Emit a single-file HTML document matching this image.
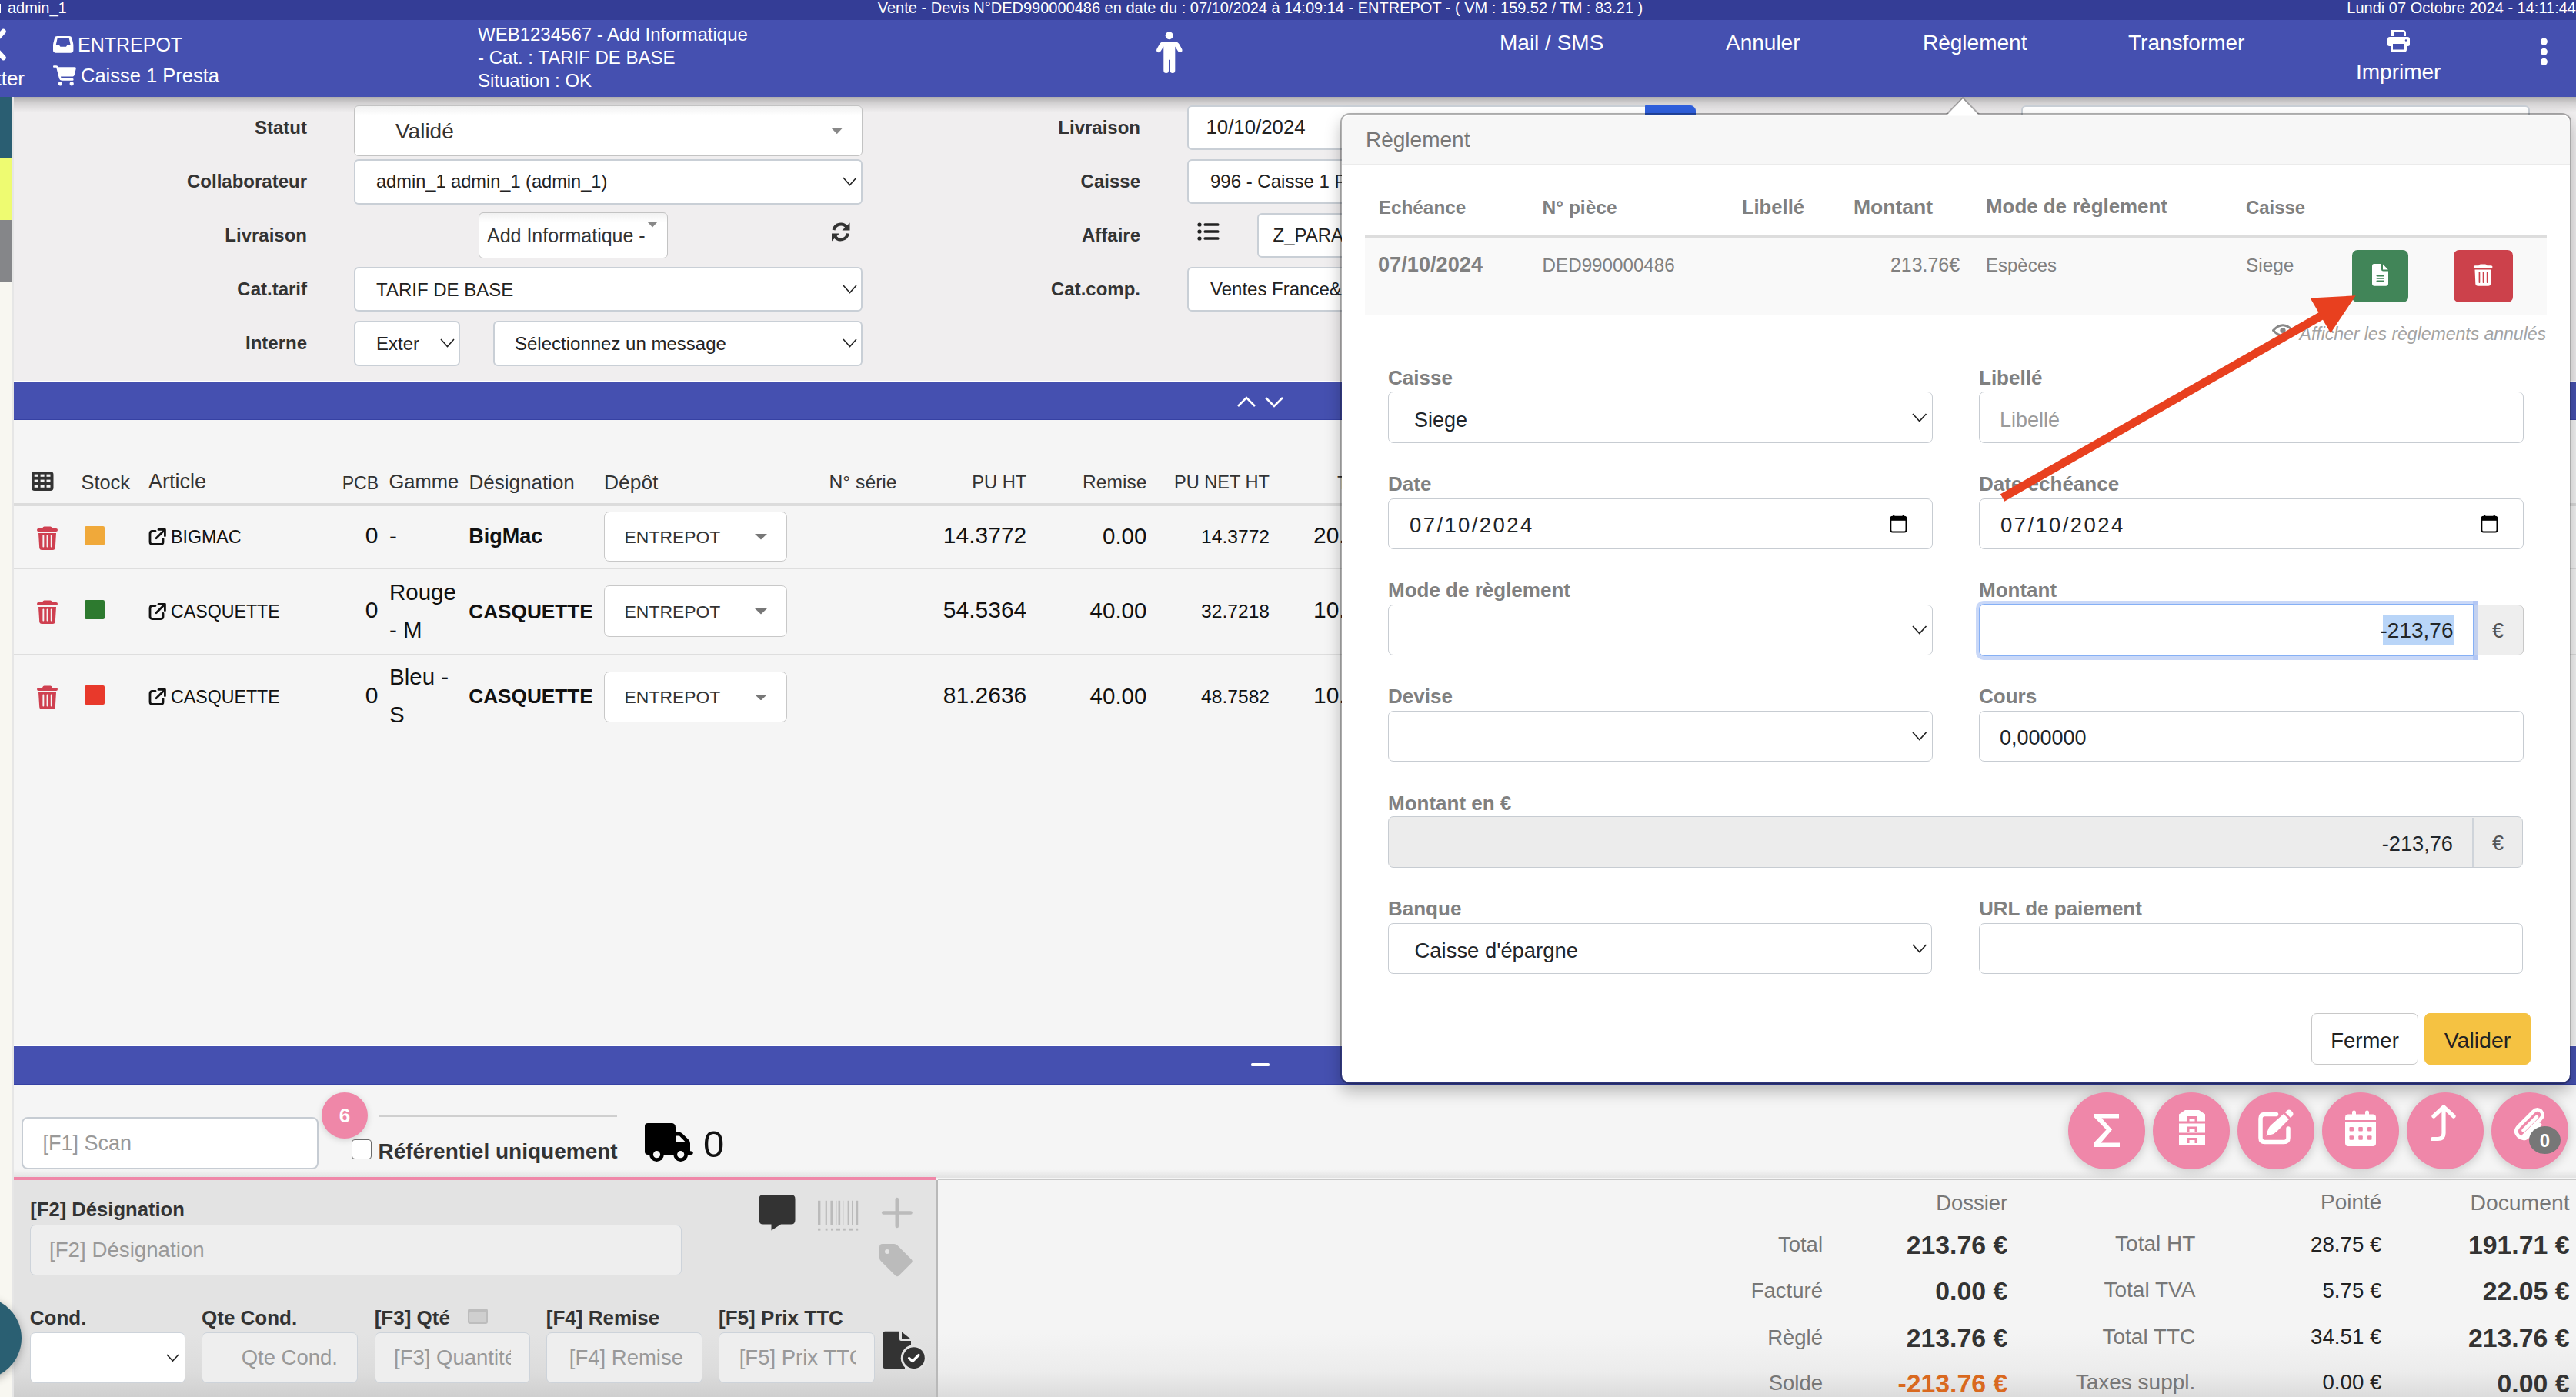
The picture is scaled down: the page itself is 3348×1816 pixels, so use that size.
<!DOCTYPE html><html><head><meta charset="utf-8"><title>Vente - Devis</title><style>html,body{margin:0;padding:0;width:3348px;height:1816px;overflow:hidden;position:relative;font-family:"Liberation Sans",sans-serif}</style></head><body><div style="position:absolute;left:0;top:0;width:3348px;height:1816px;background:#f5f5f5"></div>
<div style="position:absolute;left:0px;top:126px;width:16px;height:1690px;background:#f8f7f1;"></div>
<div style="position:absolute;left:16px;top:126px;width:2px;height:1690px;background:#e6e6e6;"></div>
<div style="position:absolute;left:0px;top:126px;width:16px;height:80px;background:#2a5e72;"></div>
<div style="position:absolute;left:0px;top:206px;width:16px;height:80px;background:#eefb71;"></div>
<div style="position:absolute;left:0px;top:286px;width:16px;height:80px;background:#858689;"></div>
<div style="position:absolute;left:18px;top:126px;width:3330px;height:370px;background:#f0eeef;"></div>
<div style="position:absolute;left:18px;top:546px;width:3330px;height:814px;background:#f5f5f5;"></div>
<div style="position:absolute;left:0px;top:0px;width:3348px;height:26px;background:#343d96;"></div>
<div style="position:absolute;left:0px;top:4.5px;width:1.4px;height:12.5px;background:#fff;"></div>
<div style="position:absolute;left:10px;top:0.07px;font-family:'Liberation Sans', sans-serif;font-size:20px;line-height:20px;height:20px;color:#fff;font-weight:normal;font-style:normal;white-space:nowrap;">admin_1</div>
<div style="position:absolute;left:1038px;width:1200px;text-align:center;top:0.07px;font-family:'Liberation Sans', sans-serif;font-size:20px;line-height:20px;height:20px;color:#fff;font-weight:normal;font-style:normal;white-space:nowrap;">Vente - Devis N°DED990000486 en date du : 07/10/2024 à 14:09:14 - ENTREPOT - ( VM : 159.52 / TM : 83.21 )</div>
<div style="position:absolute;right:0px;top:0.07px;font-family:'Liberation Sans', sans-serif;font-size:20px;line-height:20px;height:20px;color:#fff;font-weight:normal;font-style:normal;white-space:nowrap;">Lundi 07 Octobre 2024 - 14:11:44</div>
<div style="position:absolute;left:0px;top:26px;width:3348px;height:100px;background:#4550b0;"></div>
<div style="position:absolute;left:18px;top:126px;width:3330px;height:20px;background:linear-gradient(rgba(0,0,0,0.27), rgba(0,0,0,0.12) 40%, rgba(0,0,0,0.03) 85%, rgba(0,0,0,0));"></div>
<svg style="position:absolute;left:0px;top:36px;" width="12" height="44" viewBox="0 0 12 44"><polyline points="4.5,5 -11,22 4.5,39" fill="none" stroke="#fff" stroke-width="6.5" stroke-linecap="round" stroke-linejoin="round"/></svg>
<div style="position:absolute;right:3316px;top:88.59px;font-family:'Liberation Sans', sans-serif;font-size:26px;line-height:26px;height:26px;color:#fff;font-weight:normal;font-style:normal;white-space:nowrap;">Quitter</div>
<svg style="position:absolute;left:69.2px;top:45.5px;" width="26.4" height="23.6" viewBox="0 0 28 25"><path d="M5.5,1 H22.5 Q25,1 25.8,3.5 L27.5,10 Q28,12 28,14 V20.5 Q28,24 24.5,24 H3.5 Q0,24 0,20.5 V14 Q0,12 0.5,10 L2.2,3.5 Q3,1 5.5,1 Z M6,4 L4,13 H8.2 L10,15.7 H18 L19.8,13 H24 L22,4 Z" fill="#fff" fill-rule="evenodd"/></svg>
<div style="position:absolute;left:101px;top:45.84px;font-family:'Liberation Sans', sans-serif;font-size:25px;line-height:25px;height:25px;color:#fff;font-weight:normal;font-style:normal;white-space:nowrap;">ENTREPOT</div>
<svg style="position:absolute;left:69px;top:84px;" width="31" height="28" viewBox="0 0 31 28"><path d="M1,1.2 H4.3 Q6,1.2 6.6,3 L6.8,3.3 H28.2 Q30.2,3.3 29.7,5.4 L27.9,12.9 Q27.3,15.6 24.5,15.6 H10 L10.4,17.3 Q10.7,18.1 11.6,18.1 H25.3 Q26.6,18.1 26.6,19.4 Q26.6,20.7 25.3,20.7 H11.3 Q8.6,20.7 7.9,18 L4.2,3.8 H1 Q0,3.8 0,2.5 Q0,1.2 1,1.2 Z" fill="#fff"/><circle cx="9.4" cy="24.8" r="2.6" fill="#fff"/><circle cx="24.2" cy="24.8" r="2.6" fill="#fff"/></svg>
<div style="position:absolute;left:105px;top:86.41px;font-family:'Liberation Sans', sans-serif;font-size:25.5px;line-height:25.5px;height:25.5px;color:#fff;font-weight:normal;font-style:normal;white-space:nowrap;">Caisse 1 Presta</div>
<div style="position:absolute;left:621px;top:33.08px;font-family:'Liberation Sans', sans-serif;font-size:24px;line-height:24px;height:24px;color:#fff;font-weight:normal;font-style:normal;white-space:nowrap;">WEB1234567 - Add Informatique</div>
<div style="position:absolute;left:621px;top:63.38px;font-family:'Liberation Sans', sans-serif;font-size:24px;line-height:24px;height:24px;color:#fff;font-weight:normal;font-style:normal;white-space:nowrap;">- Cat. : TARIF DE BASE</div>
<div style="position:absolute;left:621px;top:93.28px;font-family:'Liberation Sans', sans-serif;font-size:24px;line-height:24px;height:24px;color:#fff;font-weight:normal;font-style:normal;white-space:nowrap;">Situation : OK</div>
<svg style="position:absolute;left:1500px;top:40px;" width="40" height="58" viewBox="0 0 40 58"><circle cx="19.7" cy="6.3" r="5" fill="#fff"/><path d="M12,14.6 H27.5 Q31,14.6 33,18 L36,23.5 Q37.3,26 35.5,27.5 Q33,29.5 31,26.5 L27.3,20.5 V51.5 Q27.3,55 24,55 Q20.8,55 20.8,51.5 V37.7 H19 V51.5 Q19,55 15.7,55 Q12.3,55 12.3,51.5 V20.5 L8.6,26.5 Q6.5,29.5 4,27.5 Q2.3,26 3.6,23.5 L6.6,18 Q8.5,14.6 12,14.6 Z" fill="#fff"/></svg>
<div style="position:absolute;left:1949px;top:41.80px;font-family:'Liberation Sans', sans-serif;font-size:28px;line-height:28px;height:28px;color:#fff;font-weight:normal;font-style:normal;white-space:nowrap;">Mail / SMS</div>
<div style="position:absolute;left:2243px;top:42.30px;font-family:'Liberation Sans', sans-serif;font-size:28px;line-height:28px;height:28px;color:#fff;font-weight:normal;font-style:normal;white-space:nowrap;">Annuler</div>
<div style="position:absolute;left:2499px;top:42.30px;font-family:'Liberation Sans', sans-serif;font-size:28px;line-height:28px;height:28px;color:#fff;font-weight:normal;font-style:normal;white-space:nowrap;">Règlement</div>
<div style="position:absolute;left:2766px;top:42.30px;font-family:'Liberation Sans', sans-serif;font-size:28px;line-height:28px;height:28px;color:#fff;font-weight:normal;font-style:normal;white-space:nowrap;">Transformer</div>
<svg style="position:absolute;left:3102px;top:38px;" width="31" height="31" viewBox="0 0 31 31"><path d="M6,1 H21 Q25,1 25,5 V9 H22 V4 H9 V9 H6 Z" fill="#fff"/><path d="M4,10 H27 Q30,10 30,13 V19.5 Q30,22 27.5,22 H26 V26.5 Q26,29.5 23,29.5 H8 Q5,29.5 5,26.5 V22 H3.5 Q1,22 1,19.5 V13 Q1,10 4,10 Z M8,19 V26.5 H23 V19 Z" fill="#fff" fill-rule="evenodd"/><circle cx="25" cy="14.5" r="1.2" fill="#4550b0"/></svg>
<div style="position:absolute;left:3062px;top:79.70px;font-family:'Liberation Sans', sans-serif;font-size:28px;line-height:28px;height:28px;color:#fff;font-weight:normal;font-style:normal;white-space:nowrap;">Imprimer</div>
<svg style="position:absolute;left:3300px;top:48px;" width="14" height="38" viewBox="0 0 14 38"><circle cx="6.4" cy="6" r="4.5" fill="#fff"/><circle cx="6.4" cy="19.3" r="4.5" fill="#fff"/><circle cx="6.4" cy="32.3" r="4.5" fill="#fff"/></svg>
<div style="position:absolute;right:2949px;top:153.68px;font-family:'Liberation Sans', sans-serif;font-size:24px;line-height:24px;height:24px;color:#333;font-weight:bold;font-style:normal;white-space:nowrap;">Statut</div>
<div style="position:absolute;right:2949px;top:223.68px;font-family:'Liberation Sans', sans-serif;font-size:24px;line-height:24px;height:24px;color:#333;font-weight:bold;font-style:normal;white-space:nowrap;">Collaborateur</div>
<div style="position:absolute;right:2949px;top:293.68px;font-family:'Liberation Sans', sans-serif;font-size:24px;line-height:24px;height:24px;color:#333;font-weight:bold;font-style:normal;white-space:nowrap;">Livraison</div>
<div style="position:absolute;right:2949px;top:363.68px;font-family:'Liberation Sans', sans-serif;font-size:24px;line-height:24px;height:24px;color:#333;font-weight:bold;font-style:normal;white-space:nowrap;">Cat.tarif</div>
<div style="position:absolute;right:2949px;top:433.68px;font-family:'Liberation Sans', sans-serif;font-size:24px;line-height:24px;height:24px;color:#333;font-weight:bold;font-style:normal;white-space:nowrap;">Interne</div>
<div style="position:absolute;box-sizing:border-box;left:459.5px;top:137px;width:661.0px;height:66px;background:#fff;border:1.5px solid #c3c3c3;border-radius:6px;background:linear-gradient(#f1f1f1 0, #fff 12px)"></div>
<div style="position:absolute;left:514px;top:156.60px;font-family:'Liberation Sans', sans-serif;font-size:28px;line-height:28px;height:28px;color:#333;font-weight:normal;font-style:normal;white-space:nowrap;">Validé</div>
<svg style="position:absolute;left:1079.5px;top:166px;" width="15.5" height="8.2" viewBox="0 0 15.5 8.2"><polygon points="0,0 15.5,0 7.75,8.2" fill="#888"/></svg>
<div style="position:absolute;box-sizing:border-box;left:459.5px;top:206.5px;width:661.0px;height:59.0px;background:#fff;border:2px solid #c9cfd6;border-radius:6px;"></div>
<div style="position:absolute;left:489px;top:225.02px;font-family:'Liberation Sans', sans-serif;font-size:23.6px;line-height:23.6px;height:23.6px;color:#222;font-weight:normal;font-style:normal;white-space:nowrap;">admin_1 admin_1 (admin_1)</div>
<svg style="position:absolute;left:1093.5px;top:229.25px;" width="21" height="13.5" viewBox="0 0 21 13.5"><polyline points="2,2 10.5,11.5 19,2" fill="none" stroke="#222" stroke-width="1.6"/></svg>
<div style="position:absolute;box-sizing:border-box;left:621.5px;top:276px;width:246.0px;height:59.5px;background:#fff;border:1.5px solid #c3c3c3;border-radius:6px;background:linear-gradient(#f1f1f1 0, #fff 12px)"></div>
<div style="position:absolute;left:633px;top:293.84px;font-family:'Liberation Sans', sans-serif;font-size:25px;line-height:25px;height:25px;color:#333;font-weight:normal;font-style:normal;white-space:nowrap;">Add Informatique -</div>
<svg style="position:absolute;left:841px;top:288px;" width="14" height="7.5" viewBox="0 0 14 7.5"><polygon points="0,0 14,0 7.0,7.5" fill="#888"/></svg>
<svg style="position:absolute;left:1079px;top:288px;" width="29" height="27" viewBox="0 0 29 27"><path d="M4.5,11 A9.5,9.5 0 0 1 21.5,7.5" fill="none" stroke="#333" stroke-width="4"/><polygon points="25.5,1.5 25.5,11.5 15.5,11.5" fill="#333"/><path d="M23,15.5 A9.5,9.5 0 0 1 6,19.5" fill="none" stroke="#333" stroke-width="4"/><polygon points="2,25.5 2,15.5 12,15.5" fill="#333"/></svg>
<div style="position:absolute;box-sizing:border-box;left:459.5px;top:347px;width:661.0px;height:57.5px;background:#fff;border:2px solid #c9cfd6;border-radius:6px;"></div>
<div style="position:absolute;left:489px;top:365.28px;font-family:'Liberation Sans', sans-serif;font-size:24px;line-height:24px;height:24px;color:#222;font-weight:normal;font-style:normal;white-space:nowrap;">TARIF DE BASE</div>
<svg style="position:absolute;left:1093.5px;top:369.25px;" width="21" height="13.5" viewBox="0 0 21 13.5"><polyline points="2,2 10.5,11.5 19,2" fill="none" stroke="#222" stroke-width="1.6"/></svg>
<div style="position:absolute;box-sizing:border-box;left:459.5px;top:417px;width:138.5px;height:58.5px;background:#fff;border:2px solid #c9cfd6;border-radius:6px;"></div>
<div style="position:absolute;left:489px;top:434.68px;font-family:'Liberation Sans', sans-serif;font-size:24px;line-height:24px;height:24px;color:#222;font-weight:normal;font-style:normal;white-space:nowrap;">Exter</div>
<svg style="position:absolute;left:570.5px;top:439.25px;" width="21" height="13.5" viewBox="0 0 21 13.5"><polyline points="2,2 10.5,11.5 19,2" fill="none" stroke="#222" stroke-width="1.6"/></svg>
<div style="position:absolute;box-sizing:border-box;left:640.5px;top:417px;width:480.0px;height:58.5px;background:#fff;border:2px solid #c9cfd6;border-radius:6px;"></div>
<div style="position:absolute;left:669px;top:434.68px;font-family:'Liberation Sans', sans-serif;font-size:24px;line-height:24px;height:24px;color:#222;font-weight:normal;font-style:normal;white-space:nowrap;">Sélectionnez un message</div>
<svg style="position:absolute;left:1093.5px;top:439.25px;" width="21" height="13.5" viewBox="0 0 21 13.5"><polyline points="2,2 10.5,11.5 19,2" fill="none" stroke="#222" stroke-width="1.6"/></svg>
<div style="position:absolute;right:1866px;top:154.08px;font-family:'Liberation Sans', sans-serif;font-size:24px;line-height:24px;height:24px;color:#333;font-weight:bold;font-style:normal;white-space:nowrap;">Livraison</div>
<div style="position:absolute;right:1866px;top:224.18px;font-family:'Liberation Sans', sans-serif;font-size:24px;line-height:24px;height:24px;color:#333;font-weight:bold;font-style:normal;white-space:nowrap;">Caisse</div>
<div style="position:absolute;right:1866px;top:294.18px;font-family:'Liberation Sans', sans-serif;font-size:24px;line-height:24px;height:24px;color:#333;font-weight:bold;font-style:normal;white-space:nowrap;">Affaire</div>
<div style="position:absolute;right:1866px;top:364.18px;font-family:'Liberation Sans', sans-serif;font-size:24px;line-height:24px;height:24px;color:#333;font-weight:bold;font-style:normal;white-space:nowrap;">Cat.comp.</div>
<div style="position:absolute;box-sizing:border-box;left:1543px;top:137px;width:607px;height:58px;background:#fff;border:2px solid #c9cfd6;border-radius:6px;"></div>
<div style="position:absolute;left:1567.5px;top:152.56px;font-family:'Liberation Sans', sans-serif;font-size:25.8px;line-height:25.8px;height:25.8px;color:#222;font-weight:normal;font-style:normal;white-space:nowrap;">10/10/2024</div>
<div style="position:absolute;box-sizing:border-box;left:1543px;top:207px;width:257px;height:58px;background:#fff;border:2px solid #c9cfd6;border-radius:6px;"></div>
<div style="position:absolute;left:1573px;top:224.18px;font-family:'Liberation Sans', sans-serif;font-size:24px;line-height:24px;height:24px;color:#222;font-weight:normal;font-style:normal;white-space:nowrap;">996 - Caisse 1 Presta</div>
<div style="position:absolute;box-sizing:border-box;left:1634px;top:277px;width:166px;height:58px;background:#fff;border:2px solid #c9cfd6;border-radius:6px;"></div>
<div style="position:absolute;left:1654.5px;top:294.18px;font-family:'Liberation Sans', sans-serif;font-size:24px;line-height:24px;height:24px;color:#222;font-weight:normal;font-style:normal;white-space:nowrap;">Z_PARAM</div>
<div style="position:absolute;box-sizing:border-box;left:1543px;top:347px;width:257px;height:58px;background:#fff;border:2px solid #c9cfd6;border-radius:6px;"></div>
<div style="position:absolute;left:1573px;top:364.18px;font-family:'Liberation Sans', sans-serif;font-size:24px;line-height:24px;height:24px;color:#222;font-weight:normal;font-style:normal;white-space:nowrap;">Ventes France&amp;International</div>
<svg style="position:absolute;left:1556px;top:289px;" width="30" height="25" viewBox="0 0 30 25"><circle cx="3" cy="3" r="2.6" fill="#222"/><circle cx="3" cy="12" r="2.6" fill="#222"/><circle cx="3" cy="21" r="2.6" fill="#222"/><rect x="8.5" y="1.3" width="20" height="3.4" rx="1.5" fill="#222"/><rect x="8.5" y="10.3" width="20" height="3.4" rx="1.5" fill="#222"/><rect x="8.5" y="19.3" width="20" height="3.4" rx="1.5" fill="#222"/></svg>
<div style="position:absolute;box-sizing:border-box;left:2138px;top:137px;width:66px;height:58px;background:#2f5fdc;border:1px solid #2f5fdc;border-radius:6px;border-radius:0 7px 7px 0"></div>
<div style="position:absolute;box-sizing:border-box;left:2627px;top:137px;width:661px;height:58px;background:#fff;border:2px solid #c9cfd6;border-radius:6px;"></div>
<div style="position:absolute;left:18px;top:495px;width:3330px;height:1px;background:#ffffff;"></div>
<div style="position:absolute;left:18px;top:496px;width:3330px;height:50px;background:#4550b0;border-bottom:1.5px solid #3641a3;box-sizing:border-box"></div>
<svg style="position:absolute;left:1604px;top:508px;" width="68" height="26" viewBox="0 0 68 26"><polyline points="5,20 16,9 27,20" fill="none" stroke="#fff" stroke-width="2.6"/><polyline points="41,9 52,20 63,9" fill="none" stroke="#fff" stroke-width="2.6"/></svg>
<svg style="position:absolute;left:41px;top:613px;" width="29" height="25" viewBox="0 0 29 25"><rect x="0" y="0" width="28.5" height="25" rx="4" fill="#333"/><rect x="3.7" y="3.6" width="5" height="3.2" fill="#f5f5f5"/><rect x="3.7" y="10.6" width="5" height="3.2" fill="#f5f5f5"/><rect x="3.7" y="17.6" width="5" height="3.2" fill="#f5f5f5"/><rect x="11.600000000000001" y="3.6" width="5" height="3.2" fill="#f5f5f5"/><rect x="11.600000000000001" y="10.6" width="5" height="3.2" fill="#f5f5f5"/><rect x="11.600000000000001" y="17.6" width="5" height="3.2" fill="#f5f5f5"/><rect x="19.5" y="3.6" width="5" height="3.2" fill="#f5f5f5"/><rect x="19.5" y="10.6" width="5" height="3.2" fill="#f5f5f5"/><rect x="19.5" y="17.6" width="5" height="3.2" fill="#f5f5f5"/></svg>
<div style="position:absolute;left:105.5px;top:614.50px;font-family:'Liberation Sans', sans-serif;font-size:25.4px;line-height:25.4px;height:25.4px;color:#333;font-weight:normal;font-style:normal;white-space:nowrap;">Stock</div>
<div style="position:absolute;left:193px;top:613.14px;font-family:'Liberation Sans', sans-serif;font-size:27px;line-height:27px;height:27px;color:#333;font-weight:normal;font-style:normal;white-space:nowrap;">Article</div>
<div style="position:absolute;right:2856px;top:616.53px;font-family:'Liberation Sans', sans-serif;font-size:23px;line-height:23px;height:23px;color:#333;font-weight:normal;font-style:normal;white-space:nowrap;">PCB</div>
<div style="position:absolute;left:505.5px;top:614.41px;font-family:'Liberation Sans', sans-serif;font-size:25.5px;line-height:25.5px;height:25.5px;color:#333;font-weight:normal;font-style:normal;white-space:nowrap;">Gamme</div>
<div style="position:absolute;left:609.5px;top:613.99px;font-family:'Liberation Sans', sans-serif;font-size:26px;line-height:26px;height:26px;color:#333;font-weight:normal;font-style:normal;white-space:nowrap;">Désignation</div>
<div style="position:absolute;left:785px;top:613.65px;font-family:'Liberation Sans', sans-serif;font-size:26.4px;line-height:26.4px;height:26.4px;color:#333;font-weight:normal;font-style:normal;white-space:nowrap;">Dépôt</div>
<div style="position:absolute;left:1077.5px;top:615.09px;font-family:'Liberation Sans', sans-serif;font-size:24.7px;line-height:24.7px;height:24.7px;color:#333;font-weight:normal;font-style:normal;white-space:nowrap;">N° série</div>
<div style="position:absolute;right:2013.7px;top:615.94px;font-family:'Liberation Sans', sans-serif;font-size:23.7px;line-height:23.7px;height:23.7px;color:#333;font-weight:normal;font-style:normal;white-space:nowrap;">PU HT</div>
<div style="position:absolute;right:1857.6px;top:615.18px;font-family:'Liberation Sans', sans-serif;font-size:24.6px;line-height:24.6px;height:24.6px;color:#333;font-weight:normal;font-style:normal;white-space:nowrap;">Remise</div>
<div style="position:absolute;right:1698px;top:616.02px;font-family:'Liberation Sans', sans-serif;font-size:23.6px;line-height:23.6px;height:23.6px;color:#333;font-weight:normal;font-style:normal;white-space:nowrap;">PU NET HT</div>
<div style="position:absolute;left:1738px;top:615.68px;font-family:'Liberation Sans', sans-serif;font-size:24px;line-height:24px;height:24px;color:#333;font-weight:normal;font-style:normal;white-space:nowrap;">Total HT</div>
<div style="position:absolute;left:18px;top:653.5px;width:3330px;height:4.5px;background:#dcdcdc;"></div>
<svg style="position:absolute;left:48px;top:684px;" width="27" height="31" viewBox="0 0 27 31"><path d="M9.5,0.5 H17.5 Q19,0.5 19.5,2 L20,3 H25 Q27,3 27,5 Q27,7 25,7 H2 Q0,7 0,5 Q0,3 2,3 H7 L7.5,2 Q8,0.5 9.5,0.5 Z" fill="#cf4050"/><path d="M2,9 H25 L23.8,28 Q23.6,31 20.5,31 H6.5 Q3.4,31 3.2,28 Z" fill="#cf4050"/><rect x="7.4" y="11.5" width="1.9" height="16" rx="0.9" fill="#f5f5f5"/><rect x="12.6" y="11.5" width="1.9" height="16" rx="0.9" fill="#f5f5f5"/><rect x="17.8" y="11.5" width="1.9" height="16" rx="0.9" fill="#f5f5f5"/></svg>
<div style="position:absolute;left:110.4px;top:683.6px;width:25.599999999999994px;height:25.5px;background:#f0a93a;border-radius:2px"></div>
<svg style="position:absolute;left:192.5px;top:687.1px;" width="23" height="23" viewBox="0 0 23 23"><path d="M9,3.5 H5 Q2,3.5 2,6.5 V17.5 Q2,20.5 5,20.5 H16 Q19,20.5 19,17.5 V13.5" fill="none" stroke="#111" stroke-width="2.8" stroke-linecap="round"/><path d="M13,1.4 H21.4 V9.8" fill="none" stroke="#111" stroke-width="2.8" stroke-linecap="round" stroke-linejoin="round"/><line x1="20.5" y1="2.3" x2="10" y2="12.8" stroke="#111" stroke-width="2.8" stroke-linecap="round"/></svg>
<div style="position:absolute;left:222px;top:686.96px;font-family:'Liberation Sans', sans-serif;font-size:23.2px;line-height:23.2px;height:23.2px;color:#111;font-weight:normal;font-style:normal;white-space:nowrap;">BIGMAC</div>
<div style="position:absolute;right:2856.7px;top:681.21px;font-family:'Liberation Sans', sans-serif;font-size:30px;line-height:30px;height:30px;color:#111;font-weight:normal;font-style:normal;white-space:nowrap;">0</div>
<div style="position:absolute;left:506px;top:681.63px;font-family:'Liberation Sans', sans-serif;font-size:29.5px;line-height:29.5px;height:29.5px;color:#111;font-weight:normal;font-style:normal;white-space:nowrap;">-</div>
<div style="position:absolute;left:609.3px;top:683.74px;font-family:'Liberation Sans', sans-serif;font-size:27px;line-height:27px;height:27px;color:#111;font-weight:bold;font-style:normal;white-space:nowrap;">BigMac</div>
<div style="position:absolute;box-sizing:border-box;left:784.5px;top:665.4px;width:238.79999999999995px;height:65.10000000000002px;background:#fff;border:1.5px solid #c8c8c8;border-radius:7px;"></div>
<div style="position:absolute;left:811.6px;top:687.22px;font-family:'Liberation Sans', sans-serif;font-size:22.9px;line-height:22.9px;height:22.9px;color:#333;font-weight:normal;font-style:normal;white-space:nowrap;">ENTREPOT</div>
<svg style="position:absolute;left:981px;top:694.45px;" width="16" height="7.5" viewBox="0 0 16 7.5"><polygon points="0,0 16,0 8.0,7.5" fill="#777"/></svg>
<div style="position:absolute;right:2013.7px;top:681.21px;font-family:'Liberation Sans', sans-serif;font-size:30px;line-height:30px;height:30px;color:#111;font-weight:normal;font-style:normal;white-space:nowrap;">14.3772</div>
<div style="position:absolute;right:1857.6px;top:681.63px;font-family:'Liberation Sans', sans-serif;font-size:29.5px;line-height:29.5px;height:29.5px;color:#111;font-weight:normal;font-style:normal;white-space:nowrap;">0.00</div>
<div style="position:absolute;right:1698px;top:685.78px;font-family:'Liberation Sans', sans-serif;font-size:24.6px;line-height:24.6px;height:24.6px;color:#111;font-weight:normal;font-style:normal;white-space:nowrap;">14.3772</div>
<div style="position:absolute;left:1707px;top:681.21px;font-family:'Liberation Sans', sans-serif;font-size:30px;line-height:30px;height:30px;color:#111;font-weight:normal;font-style:normal;white-space:nowrap;">20.</div>
<div style="position:absolute;left:18px;top:738px;width:3330px;height:1.5px;background:#dedede;"></div>
<svg style="position:absolute;left:48px;top:780px;" width="27" height="31" viewBox="0 0 27 31"><path d="M9.5,0.5 H17.5 Q19,0.5 19.5,2 L20,3 H25 Q27,3 27,5 Q27,7 25,7 H2 Q0,7 0,5 Q0,3 2,3 H7 L7.5,2 Q8,0.5 9.5,0.5 Z" fill="#cf4050"/><path d="M2,9 H25 L23.8,28 Q23.6,31 20.5,31 H6.5 Q3.4,31 3.2,28 Z" fill="#cf4050"/><rect x="7.4" y="11.5" width="1.9" height="16" rx="0.9" fill="#f5f5f5"/><rect x="12.6" y="11.5" width="1.9" height="16" rx="0.9" fill="#f5f5f5"/><rect x="17.8" y="11.5" width="1.9" height="16" rx="0.9" fill="#f5f5f5"/></svg>
<div style="position:absolute;left:110.4px;top:779.6px;width:25.599999999999994px;height:25.5px;background:#2d7a2f;border-radius:2px"></div>
<svg style="position:absolute;left:192.5px;top:784.3px;" width="23" height="23" viewBox="0 0 23 23"><path d="M9,3.5 H5 Q2,3.5 2,6.5 V17.5 Q2,20.5 5,20.5 H16 Q19,20.5 19,17.5 V13.5" fill="none" stroke="#111" stroke-width="2.8" stroke-linecap="round"/><path d="M13,1.4 H21.4 V9.8" fill="none" stroke="#111" stroke-width="2.8" stroke-linecap="round" stroke-linejoin="round"/><line x1="20.5" y1="2.3" x2="10" y2="12.8" stroke="#111" stroke-width="2.8" stroke-linecap="round"/></svg>
<div style="position:absolute;left:222px;top:784.16px;font-family:'Liberation Sans', sans-serif;font-size:23.2px;line-height:23.2px;height:23.2px;color:#111;font-weight:normal;font-style:normal;white-space:nowrap;">CASQUETTE</div>
<div style="position:absolute;right:2856.7px;top:778.40px;font-family:'Liberation Sans', sans-serif;font-size:30px;line-height:30px;height:30px;color:#111;font-weight:normal;font-style:normal;white-space:nowrap;">0</div>
<div style="position:absolute;left:506px;top:755.23px;font-family:'Liberation Sans', sans-serif;font-size:29.5px;line-height:29.5px;height:29.5px;color:#111;font-weight:normal;font-style:normal;white-space:nowrap;">Rouge</div>
<div style="position:absolute;left:506px;top:804.03px;font-family:'Liberation Sans', sans-serif;font-size:29.5px;line-height:29.5px;height:29.5px;color:#111;font-weight:normal;font-style:normal;white-space:nowrap;">- M</div>
<div style="position:absolute;left:609.3px;top:781.62px;font-family:'Liberation Sans', sans-serif;font-size:26.2px;line-height:26.2px;height:26.2px;color:#111;font-weight:bold;font-style:normal;white-space:nowrap;">CASQUETTE</div>
<div style="position:absolute;box-sizing:border-box;left:784.5px;top:761.3px;width:238.79999999999995px;height:66.90000000000009px;background:#fff;border:1.5px solid #c8c8c8;border-radius:7px;"></div>
<div style="position:absolute;left:811.6px;top:784.42px;font-family:'Liberation Sans', sans-serif;font-size:22.9px;line-height:22.9px;height:22.9px;color:#333;font-weight:normal;font-style:normal;white-space:nowrap;">ENTREPOT</div>
<svg style="position:absolute;left:981px;top:791.25px;" width="16" height="7.5" viewBox="0 0 16 7.5"><polygon points="0,0 16,0 8.0,7.5" fill="#777"/></svg>
<div style="position:absolute;right:2013.7px;top:778.40px;font-family:'Liberation Sans', sans-serif;font-size:30px;line-height:30px;height:30px;color:#111;font-weight:normal;font-style:normal;white-space:nowrap;">54.5364</div>
<div style="position:absolute;right:1857.6px;top:778.83px;font-family:'Liberation Sans', sans-serif;font-size:29.5px;line-height:29.5px;height:29.5px;color:#111;font-weight:normal;font-style:normal;white-space:nowrap;">40.00</div>
<div style="position:absolute;right:1698px;top:782.98px;font-family:'Liberation Sans', sans-serif;font-size:24.6px;line-height:24.6px;height:24.6px;color:#111;font-weight:normal;font-style:normal;white-space:nowrap;">32.7218</div>
<div style="position:absolute;left:1707px;top:778.40px;font-family:'Liberation Sans', sans-serif;font-size:30px;line-height:30px;height:30px;color:#111;font-weight:normal;font-style:normal;white-space:nowrap;">10.</div>
<div style="position:absolute;left:18px;top:849.5px;width:3330px;height:1.5px;background:#dedede;"></div>
<svg style="position:absolute;left:48px;top:891px;" width="27" height="31" viewBox="0 0 27 31"><path d="M9.5,0.5 H17.5 Q19,0.5 19.5,2 L20,3 H25 Q27,3 27,5 Q27,7 25,7 H2 Q0,7 0,5 Q0,3 2,3 H7 L7.5,2 Q8,0.5 9.5,0.5 Z" fill="#cf4050"/><path d="M2,9 H25 L23.8,28 Q23.6,31 20.5,31 H6.5 Q3.4,31 3.2,28 Z" fill="#cf4050"/><rect x="7.4" y="11.5" width="1.9" height="16" rx="0.9" fill="#f5f5f5"/><rect x="12.6" y="11.5" width="1.9" height="16" rx="0.9" fill="#f5f5f5"/><rect x="17.8" y="11.5" width="1.9" height="16" rx="0.9" fill="#f5f5f5"/></svg>
<div style="position:absolute;left:110.4px;top:890.5px;width:25.599999999999994px;height:25.5px;background:#e8392b;border-radius:2px"></div>
<svg style="position:absolute;left:192.5px;top:895.0px;" width="23" height="23" viewBox="0 0 23 23"><path d="M9,3.5 H5 Q2,3.5 2,6.5 V17.5 Q2,20.5 5,20.5 H16 Q19,20.5 19,17.5 V13.5" fill="none" stroke="#111" stroke-width="2.8" stroke-linecap="round"/><path d="M13,1.4 H21.4 V9.8" fill="none" stroke="#111" stroke-width="2.8" stroke-linecap="round" stroke-linejoin="round"/><line x1="20.5" y1="2.3" x2="10" y2="12.8" stroke="#111" stroke-width="2.8" stroke-linecap="round"/></svg>
<div style="position:absolute;left:222px;top:894.86px;font-family:'Liberation Sans', sans-serif;font-size:23.2px;line-height:23.2px;height:23.2px;color:#111;font-weight:normal;font-style:normal;white-space:nowrap;">CASQUETTE</div>
<div style="position:absolute;right:2856.7px;top:889.11px;font-family:'Liberation Sans', sans-serif;font-size:30px;line-height:30px;height:30px;color:#111;font-weight:normal;font-style:normal;white-space:nowrap;">0</div>
<div style="position:absolute;left:506px;top:865.43px;font-family:'Liberation Sans', sans-serif;font-size:29.5px;line-height:29.5px;height:29.5px;color:#111;font-weight:normal;font-style:normal;white-space:nowrap;">Bleu -</div>
<div style="position:absolute;left:506px;top:914.23px;font-family:'Liberation Sans', sans-serif;font-size:29.5px;line-height:29.5px;height:29.5px;color:#111;font-weight:normal;font-style:normal;white-space:nowrap;">S</div>
<div style="position:absolute;left:609.3px;top:892.32px;font-family:'Liberation Sans', sans-serif;font-size:26.2px;line-height:26.2px;height:26.2px;color:#111;font-weight:bold;font-style:normal;white-space:nowrap;">CASQUETTE</div>
<div style="position:absolute;box-sizing:border-box;left:784.5px;top:873px;width:238.79999999999995px;height:66.20000000000005px;background:#fff;border:1.5px solid #c8c8c8;border-radius:7px;"></div>
<div style="position:absolute;left:811.6px;top:895.12px;font-family:'Liberation Sans', sans-serif;font-size:22.9px;line-height:22.9px;height:22.9px;color:#333;font-weight:normal;font-style:normal;white-space:nowrap;">ENTREPOT</div>
<svg style="position:absolute;left:981px;top:902.6px;" width="16" height="7.5" viewBox="0 0 16 7.5"><polygon points="0,0 16,0 8.0,7.5" fill="#777"/></svg>
<div style="position:absolute;right:2013.7px;top:889.11px;font-family:'Liberation Sans', sans-serif;font-size:30px;line-height:30px;height:30px;color:#111;font-weight:normal;font-style:normal;white-space:nowrap;">81.2636</div>
<div style="position:absolute;right:1857.6px;top:889.53px;font-family:'Liberation Sans', sans-serif;font-size:29.5px;line-height:29.5px;height:29.5px;color:#111;font-weight:normal;font-style:normal;white-space:nowrap;">40.00</div>
<div style="position:absolute;right:1698px;top:893.68px;font-family:'Liberation Sans', sans-serif;font-size:24.6px;line-height:24.6px;height:24.6px;color:#111;font-weight:normal;font-style:normal;white-space:nowrap;">48.7582</div>
<div style="position:absolute;left:1707px;top:889.11px;font-family:'Liberation Sans', sans-serif;font-size:30px;line-height:30px;height:30px;color:#111;font-weight:normal;font-style:normal;white-space:nowrap;">10.</div>
<div style="position:absolute;left:18px;top:1359px;width:3330px;height:1px;background:#ffffff;"></div>
<div style="position:absolute;left:18px;top:1360px;width:3330px;height:50px;background:#4550b0;border-bottom:1.5px solid #3641a3;box-sizing:border-box"></div>
<div style="position:absolute;left:1626px;top:1382px;width:23.5px;height:3.5px;background:#fff;border-radius:1.5px"></div>
<div style="position:absolute;left:18px;top:1410px;width:3330px;height:1px;background:#ffffff;"></div>
<div style="position:absolute;box-sizing:border-box;left:28px;top:1452px;width:386px;height:67.5px;background:#fff;border:2px solid #c6ccd3;border-radius:8px;"></div>
<div style="position:absolute;left:55.4px;top:1473.14px;font-family:'Liberation Sans', sans-serif;font-size:27px;line-height:27px;height:27px;color:#999;font-weight:normal;font-style:normal;white-space:nowrap;">[F1] Scan</div>
<div style="position:absolute;left:492.5px;top:1449.5px;width:309.1px;height:2.0px;background:#cfcfcf;"></div>
<div style="position:absolute;left:418px;top:1420px;width:60px;height:60px;border-radius:50%;background:#ef87a8;box-shadow:0 2px 8px rgba(0,0,0,0.15)"></div>
<div style="position:absolute;left:-152px;width:1200px;text-align:center;top:1437.49px;font-family:'Liberation Sans', sans-serif;font-size:26px;line-height:26px;height:26px;color:#fff;font-weight:normal;font-style:normal;white-space:nowrap;font-weight:600">6</div>
<div style="position:absolute;box-sizing:border-box;left:457px;top:1481px;width:26px;height:25.5px;background:#fff;border:1.6px solid #6b6b6b;border-radius:4px;"></div>
<div style="position:absolute;left:491.5px;top:1482.70px;font-family:'Liberation Sans', sans-serif;font-size:28px;line-height:28px;height:28px;color:#333;font-weight:bold;font-style:normal;white-space:nowrap;">Référentiel uniquement</div>
<svg style="position:absolute;left:836px;top:1458px;" width="66" height="54" viewBox="0 0 66 54"><path d="M6,2 H36.5 Q42,2 42,7.5 V13.7 H46.5 Q49,13.7 51,15.7 L58.5,23 Q61,25.5 61,28.5 V38.3 Q64.8,38.5 64.8,40.5 Q64.8,43 62,43 H6 Q2,43 2,39 V6 Q2,2 6,2 Z M43,18.4 V26.4 H54.8 L47,18.4 Z" fill="#000" fill-rule="evenodd"/><circle cx="17.5" cy="42.7" r="9.4" fill="#000"/><circle cx="17.5" cy="42.7" r="4.6" fill="#f5f5f5"/><circle cx="48.7" cy="42.7" r="9.4" fill="#000"/><circle cx="48.7" cy="42.7" r="4.6" fill="#f5f5f5"/></svg>
<div style="position:absolute;left:914px;top:1462.92px;font-family:'Liberation Sans', sans-serif;font-size:49px;line-height:49px;height:49px;color:#111;font-weight:normal;font-style:normal;white-space:nowrap;">0</div>
<div style="position:absolute;left:18px;top:1520px;width:3330px;height:11px;background:linear-gradient(rgba(0,0,0,0), rgba(0,0,0,0.08));"></div>
<div style="position:absolute;left:18px;top:1530px;width:1199px;height:4px;background:#ef87a8;"></div>
<div style="position:absolute;left:18px;top:1534px;width:1199px;height:282px;background:linear-gradient(#e3e3e3 0, #e3e3e3 200px, #dcdcdc 250px, #cfcfcf 100%);"></div>
<div style="position:absolute;left:1217px;top:1534px;width:2px;height:282px;background:#b9b9b9;"></div>
<div style="position:absolute;left:39.3px;top:1560.33px;font-family:'Liberation Sans', sans-serif;font-size:25.6px;line-height:25.6px;height:25.6px;color:#333;font-weight:bold;font-style:normal;white-space:nowrap;">[F2] Désignation</div>
<div style="position:absolute;box-sizing:border-box;left:38.8px;top:1592.3px;width:847.2px;height:65.70000000000005px;background:#eeeeee;border:1.5px solid #cdd3da;border-radius:7px;"></div>
<div style="position:absolute;left:64px;top:1611.05px;font-family:'Liberation Sans', sans-serif;font-size:27.7px;line-height:27.7px;height:27.7px;color:#999;font-weight:normal;font-style:normal;white-space:nowrap;">[F2] Désignation</div>
<svg style="position:absolute;left:986px;top:1552px;" width="49" height="49" viewBox="0 0 49 49"><path d="M6,1 H42 Q47.5,1 47.5,6.5 V34 Q47.5,39.5 42,39.5 H29 L16.5,47.5 V39.5 H6 Q0.5,39.5 0.5,34 V6.5 Q0.5,1 6,1 Z" fill="#333"/></svg>
<svg style="position:absolute;left:1063px;top:1560px;" width="54" height="41" viewBox="0 0 54 41"><rect x="0" y="0.8" width="3.4" height="32.2" fill="#bbb"/><rect x="9.7" y="0.8" width="2.2" height="32.2" fill="#bbb"/><rect x="16.4" y="0.8" width="2.8" height="32.2" fill="#bbb"/><rect x="23.3" y="0.8" width="1.1" height="32.2" fill="#bbb"/><rect x="26.5" y="0.8" width="2.6" height="32.2" fill="#bbb"/><rect x="32.2" y="0.8" width="1.1" height="32.2" fill="#bbb"/><rect x="38.6" y="0.8" width="2.2" height="32.2" fill="#bbb"/><rect x="44" y="0.8" width="1.1" height="32.2" fill="#bbb"/><rect x="49.4" y="0.8" width="2.8" height="32.2" fill="#bbb"/><rect x="0" y="36.8" width="3.4" height="2.8" fill="#bbb"/><rect x="9.7" y="36.8" width="2.8" height="2.8" fill="#bbb"/><rect x="17" y="36.8" width="2.8" height="2.8" fill="#bbb"/><rect x="23" y="36.8" width="6" height="2.8" fill="#bbb"/><rect x="33" y="36.8" width="2.8" height="2.8" fill="#bbb"/><rect x="40" y="36.8" width="6" height="2.8" fill="#bbb"/><rect x="49.4" y="36.8" width="2.8" height="2.8" fill="#bbb"/></svg>
<svg style="position:absolute;left:1145px;top:1556px;" width="42" height="41" viewBox="0 0 42 41"><line x1="20.8" y1="3" x2="20.8" y2="38" stroke="#bbb" stroke-width="4.6" stroke-linecap="round"/><line x1="3.3" y1="20.5" x2="38.5" y2="20.5" stroke="#bbb" stroke-width="4.6" stroke-linecap="round"/></svg>
<svg style="position:absolute;left:1142px;top:1616px;" width="46" height="45" viewBox="0 0 46 45"><path d="M1,5 Q1,1 5,1 H20 Q22.5,1 24.5,3 L42.5,21 Q45,23.5 42.5,26 L26.5,42 Q24,44.5 21.5,42 L3.5,24 Q1,21.5 1,19 Z" fill="#bbb"/><circle cx="11" cy="11" r="3" fill="#e3e3e3"/></svg>
<div style="position:absolute;left:-79.4px;top:1686.3px;width:107px;height:107px;border-radius:50%;background:#2a5f72;box-shadow:0 3px 12px rgba(0,0,0,0.3)"></div>
<div style="position:absolute;left:38.8px;top:1699.99px;font-family:'Liberation Sans', sans-serif;font-size:26px;line-height:26px;height:26px;color:#333;font-weight:bold;font-style:normal;white-space:nowrap;">Cond.</div>
<div style="position:absolute;box-sizing:border-box;left:38.8px;top:1732px;width:202.2px;height:65.5px;background:#fff;border:1.5px solid #cdd3da;border-radius:7px;"></div>
<svg style="position:absolute;left:214.5px;top:1759.0px;" width="19" height="12" viewBox="0 0 19 12"><polyline points="2,2 9.5,10 17,2" fill="none" stroke="#222" stroke-width="1.6"/></svg>
<div style="position:absolute;left:262px;top:1699.99px;font-family:'Liberation Sans', sans-serif;font-size:26px;line-height:26px;height:26px;color:#333;font-weight:bold;font-style:normal;white-space:nowrap;">Qte Cond.</div>
<div style="position:absolute;box-sizing:border-box;left:262px;top:1732px;width:202.8px;height:65.5px;background:#eeeeee;border:1.5px solid #cdd3da;border-radius:7px;"></div>
<div style="position:absolute;right:2909px;top:1751.22px;font-family:'Liberation Sans', sans-serif;font-size:27.5px;line-height:27.5px;height:27.5px;color:#999;font-weight:normal;font-style:normal;white-space:nowrap;">Qte Cond.</div>
<div style="position:absolute;left:486.7px;top:1699.99px;font-family:'Liberation Sans', sans-serif;font-size:26px;line-height:26px;height:26px;color:#333;font-weight:bold;font-style:normal;white-space:nowrap;">[F3] Qté</div>
<div style="position:absolute;left:607.5px;top:1701px;width:26.5px;height:20px;background:#bdbdbd;border-radius:3px"></div>
<div style="position:absolute;left:610px;top:1706px;width:21.5px;height:12px;background:#cfcfcf;border-radius:1px"></div>
<div style="position:absolute;box-sizing:border-box;left:486.7px;top:1732px;width:202.3px;height:65.5px;background:#eeeeee;border:1.5px solid #cdd3da;border-radius:7px;"></div>
<div style="position:absolute;left:488px;top:1740px;width:176px;height:50px;overflow:hidden">
<div style="position:absolute;left:24px;top:11.22px;font-family:'Liberation Sans', sans-serif;font-size:27.5px;line-height:27.5px;height:27.5px;color:#999;font-weight:normal;font-style:normal;white-space:nowrap;">[F3] Quantité</div>
</div>
<div style="position:absolute;left:709.8px;top:1699.99px;font-family:'Liberation Sans', sans-serif;font-size:26px;line-height:26px;height:26px;color:#333;font-weight:bold;font-style:normal;white-space:nowrap;">[F4] Remise</div>
<div style="position:absolute;box-sizing:border-box;left:709.8px;top:1732px;width:203.20000000000005px;height:65.5px;background:#eeeeee;border:1.5px solid #cdd3da;border-radius:7px;"></div>
<div style="position:absolute;right:2460px;top:1751.22px;font-family:'Liberation Sans', sans-serif;font-size:27.5px;line-height:27.5px;height:27.5px;color:#999;font-weight:normal;font-style:normal;white-space:nowrap;">[F4] Remise</div>
<div style="position:absolute;left:934px;top:1699.99px;font-family:'Liberation Sans', sans-serif;font-size:26px;line-height:26px;height:26px;color:#333;font-weight:bold;font-style:normal;white-space:nowrap;">[F5] Prix TTC</div>
<div style="position:absolute;box-sizing:border-box;left:934px;top:1732px;width:203px;height:65.5px;background:#eeeeee;border:1.5px solid #cdd3da;border-radius:7px;"></div>
<div style="position:absolute;left:936px;top:1740px;width:177px;height:50px;overflow:hidden">
<div style="position:absolute;left:24.7px;top:11.22px;font-family:'Liberation Sans', sans-serif;font-size:27.5px;line-height:27.5px;height:27.5px;color:#999;font-weight:normal;font-style:normal;white-space:nowrap;">[F5] Prix TTC</div>
</div>
<svg style="position:absolute;left:1146px;top:1729px;" width="62" height="52" viewBox="0 0 62 52"><path d="M4,1.8 H23 V12 Q23,14 25,14 H38 V34 A16,16 0 0 0 30,50 H4 Q1.8,50 1.8,47.8 V4 Q1.8,1.8 4,1.8 Z" fill="#333"/><path d="M26,2.5 L37.5,11.5 H26 Z" fill="#333"/><circle cx="41.8" cy="36.2" r="17" fill="#e3e3e3"/><circle cx="41.8" cy="36.2" r="14" fill="#333"/><polyline points="35.5,36.5 40,40.5 48,32.5" fill="none" stroke="#fff" stroke-width="3.2" stroke-linecap="round" stroke-linejoin="round"/></svg>
<div style="position:absolute;left:1219px;top:1531.5px;width:2129px;height:2.5px;background:#c8c8c8;"></div>
<div style="position:absolute;left:1219px;top:1534px;width:2129px;height:282px;background:linear-gradient(#f4f4f4 0, #f4f4f4 200px, #ececec 250px, #dcdcdc 100%);"></div>
<div style="position:absolute;right:738.8000000000002px;top:1549.81px;font-family:'Liberation Sans', sans-serif;font-size:27.4px;line-height:27.4px;height:27.4px;color:#777;font-weight:normal;font-style:normal;white-space:nowrap;">Dossier</div>
<div style="position:absolute;right:252.5999999999999px;top:1549.30px;font-family:'Liberation Sans', sans-serif;font-size:28px;line-height:28px;height:28px;color:#777;font-weight:normal;font-style:normal;white-space:nowrap;">Pointé</div>
<div style="position:absolute;right:8.5px;top:1549.04px;font-family:'Liberation Sans', sans-serif;font-size:28.3px;line-height:28.3px;height:28.3px;color:#777;font-weight:normal;font-style:normal;white-space:nowrap;">Document</div>
<div style="position:absolute;right:979px;top:1603.72px;font-family:'Liberation Sans', sans-serif;font-size:27.5px;line-height:27.5px;height:27.5px;color:#777;font-weight:normal;font-style:normal;white-space:nowrap;">Total</div>
<div style="position:absolute;right:738.8000000000002px;top:1601.89px;font-family:'Liberation Sans', sans-serif;font-size:33.8px;line-height:33.8px;height:33.8px;color:#333;font-weight:bold;font-style:normal;white-space:nowrap;">213.76 €</div>
<div style="position:absolute;right:494.6999999999998px;top:1603.30px;font-family:'Liberation Sans', sans-serif;font-size:28px;line-height:28px;height:28px;color:#777;font-weight:normal;font-style:normal;white-space:nowrap;">Total HT</div>
<div style="position:absolute;right:252.5999999999999px;top:1603.55px;font-family:'Liberation Sans', sans-serif;font-size:27.7px;line-height:27.7px;height:27.7px;color:#222;font-weight:normal;font-style:normal;white-space:nowrap;">28.75 €</div>
<div style="position:absolute;right:8.5px;top:1601.89px;font-family:'Liberation Sans', sans-serif;font-size:33.8px;line-height:33.8px;height:33.8px;color:#333;font-weight:bold;font-style:normal;white-space:nowrap;">191.71 €</div>
<div style="position:absolute;right:979px;top:1663.72px;font-family:'Liberation Sans', sans-serif;font-size:27.5px;line-height:27.5px;height:27.5px;color:#777;font-weight:normal;font-style:normal;white-space:nowrap;">Facturé</div>
<div style="position:absolute;right:738.8000000000002px;top:1661.89px;font-family:'Liberation Sans', sans-serif;font-size:33.8px;line-height:33.8px;height:33.8px;color:#333;font-weight:bold;font-style:normal;white-space:nowrap;">0.00 €</div>
<div style="position:absolute;right:494.6999999999998px;top:1663.30px;font-family:'Liberation Sans', sans-serif;font-size:28px;line-height:28px;height:28px;color:#777;font-weight:normal;font-style:normal;white-space:nowrap;">Total TVA</div>
<div style="position:absolute;right:252.5999999999999px;top:1663.55px;font-family:'Liberation Sans', sans-serif;font-size:27.7px;line-height:27.7px;height:27.7px;color:#222;font-weight:normal;font-style:normal;white-space:nowrap;">5.75 €</div>
<div style="position:absolute;right:8.5px;top:1661.89px;font-family:'Liberation Sans', sans-serif;font-size:33.8px;line-height:33.8px;height:33.8px;color:#333;font-weight:bold;font-style:normal;white-space:nowrap;">22.05 €</div>
<div style="position:absolute;right:979px;top:1724.52px;font-family:'Liberation Sans', sans-serif;font-size:27.5px;line-height:27.5px;height:27.5px;color:#777;font-weight:normal;font-style:normal;white-space:nowrap;">Règlé</div>
<div style="position:absolute;right:738.8000000000002px;top:1722.69px;font-family:'Liberation Sans', sans-serif;font-size:33.8px;line-height:33.8px;height:33.8px;color:#333;font-weight:bold;font-style:normal;white-space:nowrap;">213.76 €</div>
<div style="position:absolute;right:494.6999999999998px;top:1724.10px;font-family:'Liberation Sans', sans-serif;font-size:28px;line-height:28px;height:28px;color:#777;font-weight:normal;font-style:normal;white-space:nowrap;">Total TTC</div>
<div style="position:absolute;right:252.5999999999999px;top:1724.35px;font-family:'Liberation Sans', sans-serif;font-size:27.7px;line-height:27.7px;height:27.7px;color:#222;font-weight:normal;font-style:normal;white-space:nowrap;">34.51 €</div>
<div style="position:absolute;right:8.5px;top:1722.69px;font-family:'Liberation Sans', sans-serif;font-size:33.8px;line-height:33.8px;height:33.8px;color:#333;font-weight:bold;font-style:normal;white-space:nowrap;">213.76 €</div>
<div style="position:absolute;right:979px;top:1783.52px;font-family:'Liberation Sans', sans-serif;font-size:27.5px;line-height:27.5px;height:27.5px;color:#777;font-weight:normal;font-style:normal;white-space:nowrap;">Solde</div>
<div style="position:absolute;right:738.8000000000002px;top:1781.69px;font-family:'Liberation Sans', sans-serif;font-size:33.8px;line-height:33.8px;height:33.8px;color:#d9691f;font-weight:bold;font-style:normal;white-space:nowrap;">-213.76 €</div>
<div style="position:absolute;right:494.6999999999998px;top:1783.10px;font-family:'Liberation Sans', sans-serif;font-size:28px;line-height:28px;height:28px;color:#777;font-weight:normal;font-style:normal;white-space:nowrap;">Taxes suppl.</div>
<div style="position:absolute;right:252.5999999999999px;top:1783.35px;font-family:'Liberation Sans', sans-serif;font-size:27.7px;line-height:27.7px;height:27.7px;color:#222;font-weight:normal;font-style:normal;white-space:nowrap;">0.00 €</div>
<div style="position:absolute;right:8.5px;top:1781.69px;font-family:'Liberation Sans', sans-serif;font-size:33.8px;line-height:33.8px;height:33.8px;color:#333;font-weight:bold;font-style:normal;white-space:nowrap;">0.00 €</div>
<div style="position:absolute;box-sizing:border-box;left:1742px;top:146.5px;width:1599.5px;height:1262.5px;background:#fff;border:2px solid rgba(0,0,0,0.3);background-clip:padding-box;border-radius:12px;box-shadow:0 10px 20px rgba(0,0,0,0.25)"></div>
<div style="position:absolute;left:1744px;top:148.5px;width:1595.5px;height:64.5px;background:#f7f7f7;border-bottom:1.5px solid #ebebeb;border-radius:10px 10px 0 0;box-shadow:inset 0 1.5px 0 #fff"></div>
<svg style="position:absolute;left:2526px;top:124px;" width="50" height="25" viewBox="0 0 50 25"><polygon points="3,24 25,2 47,24" fill="rgba(0,0,0,0.25)"/><polygon points="5,25 25,4.2 45,25" fill="#fff"/></svg>
<div style="position:absolute;left:1775px;top:168.30px;font-family:'Liberation Sans', sans-serif;font-size:28px;line-height:28px;height:28px;color:#777;font-weight:normal;font-style:normal;white-space:nowrap;">Règlement</div>
<div style="position:absolute;left:1791.8px;top:257.73px;font-family:'Liberation Sans', sans-serif;font-size:24.3px;line-height:24.3px;height:24.3px;color:#808080;font-weight:bold;font-style:normal;white-space:nowrap;">Echéance</div>
<div style="position:absolute;left:2004.6px;top:257.56px;font-family:'Liberation Sans', sans-serif;font-size:24.5px;line-height:24.5px;height:24.5px;color:#808080;font-weight:bold;font-style:normal;white-space:nowrap;">N° pièce</div>
<div style="position:absolute;left:2263.7px;top:256.54px;font-family:'Liberation Sans', sans-serif;font-size:25.7px;line-height:25.7px;height:25.7px;color:#808080;font-weight:bold;font-style:normal;white-space:nowrap;">Libellé</div>
<div style="position:absolute;left:2409px;top:255.87px;font-family:'Liberation Sans', sans-serif;font-size:26.5px;line-height:26.5px;height:26.5px;color:#808080;font-weight:bold;font-style:normal;white-space:nowrap;">Montant</div>
<div style="position:absolute;left:2581px;top:256.38px;font-family:'Liberation Sans', sans-serif;font-size:25.9px;line-height:25.9px;height:25.9px;color:#808080;font-weight:bold;font-style:normal;white-space:nowrap;">Mode de règlement</div>
<div style="position:absolute;left:2919px;top:258.07px;font-family:'Liberation Sans', sans-serif;font-size:23.9px;line-height:23.9px;height:23.9px;color:#808080;font-weight:bold;font-style:normal;white-space:nowrap;">Caisse</div>
<div style="position:absolute;left:1774px;top:305px;width:1536px;height:4px;background:#dddddd;"></div>
<div style="position:absolute;left:1774px;top:309px;width:1536px;height:100px;background:#f9f9f9;"></div>
<div style="position:absolute;left:1791px;top:330.48px;font-family:'Liberation Sans', sans-serif;font-size:27.2px;line-height:27.2px;height:27.2px;color:#808080;font-weight:bold;font-style:normal;white-space:nowrap;">07/10/2024</div>
<div style="position:absolute;left:2004.6px;top:333.01px;font-family:'Liberation Sans', sans-serif;font-size:24.2px;line-height:24.2px;height:24.2px;color:#808080;font-weight:normal;font-style:normal;white-space:nowrap;">DED990000486</div>
<div style="position:absolute;right:801px;top:332.42px;font-family:'Liberation Sans', sans-serif;font-size:24.9px;line-height:24.9px;height:24.9px;color:#808080;font-weight:normal;font-style:normal;white-space:nowrap;">213.76€</div>
<div style="position:absolute;left:2581px;top:333.18px;font-family:'Liberation Sans', sans-serif;font-size:24px;line-height:24px;height:24px;color:#808080;font-weight:normal;font-style:normal;white-space:nowrap;">Espèces</div>
<div style="position:absolute;left:2919px;top:332.85px;font-family:'Liberation Sans', sans-serif;font-size:24.4px;line-height:24.4px;height:24.4px;color:#808080;font-weight:normal;font-style:normal;white-space:nowrap;">Siege</div>
<div style="position:absolute;left:3057px;top:325px;width:73px;height:68px;background:#418558;border-radius:7px"></div>
<svg style="position:absolute;left:3082px;top:342px;" width="24" height="31" viewBox="0 0 24 31"><path d="M3.5,1 H13 V8 Q13,10.5 15.5,10.5 H22 V26.5 Q22,29.7 18.8,29.7 H4.2 Q1,29.7 1,26.5 V4.2 Q1,1 3.5,1 Z" fill="#fff"/><path d="M15,1.5 L21.8,8.5 H15 Z" fill="#fff"/><rect x="6.5" y="15.7" width="10.5" height="1.7" rx="0.8" fill="#418558"/><rect x="6.5" y="19" width="10.5" height="1.7" rx="0.8" fill="#418558"/><rect x="6.5" y="22.5" width="10.5" height="1.7" rx="0.8" fill="#418558"/></svg>
<div style="position:absolute;left:3189px;top:325px;width:77px;height:68px;background:#cc414b;border-radius:7px"></div>
<svg style="position:absolute;left:3214px;top:342px;" width="27" height="31" viewBox="0 0 27 31"><path d="M10,1.5 H16 Q18,1.5 18.5,3.2 H23.5 Q25.5,3.2 25.5,5 Q25.5,6.7 23.5,6.7 H2.8 Q0.8,6.7 0.8,5 Q0.8,3.2 2.8,3.2 H7.5 Q8,1.5 10,1.5 Z" fill="#fff"/><path d="M2.5,8.5 H24 L23.2,26.5 Q23,29.8 19.8,29.8 H6.7 Q3.5,29.8 3.3,26.5 Z" fill="#fff"/><rect x="7.6" y="11.3" width="1.7" height="14.7" rx="0.8" fill="#cc414b"/><rect x="12.7" y="11.3" width="1.7" height="14.7" rx="0.8" fill="#cc414b"/><rect x="17.8" y="11.3" width="1.7" height="14.7" rx="0.8" fill="#cc414b"/></svg>
<svg style="position:absolute;left:2953px;top:420px;" width="28" height="19" viewBox="0 0 28 19"><path d="M1.5,9.5 Q14,-4 26.5,9.5 Q14,23 1.5,9.5 Z" fill="none" stroke="#888" stroke-width="3"/><circle cx="14" cy="9.5" r="3.6" fill="#888"/></svg>
<div style="position:absolute;right:39px;top:422.66px;font-family:'Liberation Sans', sans-serif;font-size:23.2px;line-height:23.2px;height:23.2px;color:#a3a3a3;font-weight:normal;font-style:italic;white-space:nowrap;letter-spacing:-0.1px">Afficher les règlements annulés</div>
<div style="position:absolute;left:1804px;top:477.99px;font-family:'Liberation Sans', sans-serif;font-size:26px;line-height:26px;height:26px;color:#808080;font-weight:bold;font-style:normal;white-space:nowrap;">Caisse</div>
<div style="position:absolute;left:2572px;top:477.99px;font-family:'Liberation Sans', sans-serif;font-size:26px;line-height:26px;height:26px;color:#808080;font-weight:bold;font-style:normal;white-space:nowrap;">Libellé</div>
<div style="position:absolute;left:1804px;top:616.39px;font-family:'Liberation Sans', sans-serif;font-size:26px;line-height:26px;height:26px;color:#808080;font-weight:bold;font-style:normal;white-space:nowrap;">Date</div>
<div style="position:absolute;left:2572px;top:616.39px;font-family:'Liberation Sans', sans-serif;font-size:26px;line-height:26px;height:26px;color:#808080;font-weight:bold;font-style:normal;white-space:nowrap;">Date échéance</div>
<div style="position:absolute;left:1804px;top:753.99px;font-family:'Liberation Sans', sans-serif;font-size:26px;line-height:26px;height:26px;color:#808080;font-weight:bold;font-style:normal;white-space:nowrap;">Mode de règlement</div>
<div style="position:absolute;left:2572px;top:753.99px;font-family:'Liberation Sans', sans-serif;font-size:26px;line-height:26px;height:26px;color:#808080;font-weight:bold;font-style:normal;white-space:nowrap;">Montant</div>
<div style="position:absolute;left:1804px;top:891.99px;font-family:'Liberation Sans', sans-serif;font-size:26px;line-height:26px;height:26px;color:#808080;font-weight:bold;font-style:normal;white-space:nowrap;">Devise</div>
<div style="position:absolute;left:2572px;top:891.99px;font-family:'Liberation Sans', sans-serif;font-size:26px;line-height:26px;height:26px;color:#808080;font-weight:bold;font-style:normal;white-space:nowrap;">Cours</div>
<div style="position:absolute;left:1804px;top:1030.99px;font-family:'Liberation Sans', sans-serif;font-size:26px;line-height:26px;height:26px;color:#808080;font-weight:bold;font-style:normal;white-space:nowrap;">Montant en €</div>
<div style="position:absolute;left:1804px;top:1168.39px;font-family:'Liberation Sans', sans-serif;font-size:26px;line-height:26px;height:26px;color:#808080;font-weight:bold;font-style:normal;white-space:nowrap;">Banque</div>
<div style="position:absolute;left:2572px;top:1168.39px;font-family:'Liberation Sans', sans-serif;font-size:26px;line-height:26px;height:26px;color:#808080;font-weight:bold;font-style:normal;white-space:nowrap;">URL de paiement</div>
<div style="position:absolute;box-sizing:border-box;left:1804px;top:509.3px;width:707.5px;height:66.99999999999994px;background:#fff;border:1.5px solid #c7ccd2;border-radius:7px;"></div>
<div style="position:absolute;left:1838px;top:532.54px;font-family:'Liberation Sans', sans-serif;font-size:27px;line-height:27px;height:27px;color:#212529;font-weight:normal;font-style:normal;white-space:nowrap;">Siege</div>
<svg style="position:absolute;left:2483.95px;top:536.05px;" width="21.5" height="13.5" viewBox="0 0 21.5 13.5"><polyline points="2,2 10.75,11.5 19.5,2" fill="none" stroke="#222" stroke-width="1.7"/></svg>
<div style="position:absolute;box-sizing:border-box;left:2572px;top:509.3px;width:707.5px;height:66.99999999999994px;background:#fff;border:1.5px solid #c7ccd2;border-radius:7px;"></div>
<div style="position:absolute;left:2599px;top:532.54px;font-family:'Liberation Sans', sans-serif;font-size:27px;line-height:27px;height:27px;color:#9a9a9a;font-weight:normal;font-style:normal;white-space:nowrap;">Libellé</div>
<div style="position:absolute;box-sizing:border-box;left:1804px;top:647.6px;width:707.5px;height:66.89999999999998px;background:#fff;border:1.5px solid #c7ccd2;border-radius:7px;"></div>
<div style="position:absolute;left:1832px;top:669.22px;font-family:'Liberation Sans', sans-serif;font-size:27.5px;line-height:27.5px;height:27.5px;color:#212529;font-weight:normal;font-style:normal;white-space:nowrap;letter-spacing:2.4px">07/10/2024</div>
<svg style="position:absolute;left:2456px;top:667.5px;" width="23" height="25" viewBox="0 0 23 25"><rect x="1.3" y="3.8" width="20.2" height="19.8" rx="2.5" fill="none" stroke="#000" stroke-width="2"/><rect x="1.3" y="3.8" width="20.2" height="5" fill="#000"/><rect x="4.2" y="1.2" width="2" height="3.5" rx="1" fill="#000"/><rect x="16.7" y="1.2" width="2" height="3.5" rx="1" fill="#000"/></svg>
<div style="position:absolute;box-sizing:border-box;left:2572px;top:647.6px;width:707.5px;height:66.89999999999998px;background:#fff;border:1.5px solid #c7ccd2;border-radius:7px;"></div>
<div style="position:absolute;left:2600px;top:669.22px;font-family:'Liberation Sans', sans-serif;font-size:27.5px;line-height:27.5px;height:27.5px;color:#212529;font-weight:normal;font-style:normal;white-space:nowrap;letter-spacing:2.4px">07/10/2024</div>
<svg style="position:absolute;left:3224px;top:667.5px;" width="23" height="25" viewBox="0 0 23 25"><rect x="1.3" y="3.8" width="20.2" height="19.8" rx="2.5" fill="none" stroke="#000" stroke-width="2"/><rect x="1.3" y="3.8" width="20.2" height="5" fill="#000"/><rect x="4.2" y="1.2" width="2" height="3.5" rx="1" fill="#000"/><rect x="16.7" y="1.2" width="2" height="3.5" rx="1" fill="#000"/></svg>
<div style="position:absolute;box-sizing:border-box;left:1804px;top:785.5px;width:707.5px;height:66.5px;background:#fff;border:1.5px solid #c7ccd2;border-radius:7px;"></div>
<svg style="position:absolute;left:2483.95px;top:811.95px;" width="21.5" height="13.5" viewBox="0 0 21.5 13.5"><polyline points="2,2 10.75,11.5 19.5,2" fill="none" stroke="#222" stroke-width="1.7"/></svg>
<div style="position:absolute;box-sizing:border-box;left:2568px;top:781px;width:652px;height:77px;background:#c9d8f8;border-radius:10px 0 0 10px"></div>
<div style="position:absolute;box-sizing:border-box;left:3214px;top:785.5px;width:65.5px;height:66.5px;background:#eeeeee;border:1.5px solid #c8c8c8;border-radius:7px;border-radius:0 7px 7px 0"></div>
<div style="position:absolute;left:3214px;top:781px;width:6px;height:77px;background:rgba(160,185,240,0.55);"></div>
<div style="position:absolute;box-sizing:border-box;left:2572px;top:785px;width:642.5px;height:67.5px;background:#fff;border:1.6px solid #86b0f5;border-radius:7px;border-radius:7px 0 0 7px"></div>
<div style="position:absolute;left:3097px;top:800px;width:91.80000000000018px;height:38px;background:#b9d5f8;"></div>
<div style="position:absolute;right:159.5px;top:806.30px;font-family:'Liberation Sans', sans-serif;font-size:28px;line-height:28px;height:28px;color:#212529;font-weight:normal;font-style:normal;white-space:nowrap;">-213,76</div>
<div style="position:absolute;left:2646.5px;width:1200px;text-align:center;top:807.14px;font-family:'Liberation Sans', sans-serif;font-size:27px;line-height:27px;height:27px;color:#555;font-weight:normal;font-style:normal;white-space:nowrap;">€</div>
<div style="position:absolute;box-sizing:border-box;left:1804px;top:923.8px;width:707.5px;height:66.20000000000005px;background:#fff;border:1.5px solid #c7ccd2;border-radius:7px;"></div>
<svg style="position:absolute;left:2483.95px;top:950.25px;" width="21.5" height="13.5" viewBox="0 0 21.5 13.5"><polyline points="2,2 10.75,11.5 19.5,2" fill="none" stroke="#222" stroke-width="1.7"/></svg>
<div style="position:absolute;box-sizing:border-box;left:2572px;top:923.8px;width:707.5px;height:66.20000000000005px;background:#fff;border:1.5px solid #c7ccd2;border-radius:7px;"></div>
<div style="position:absolute;left:2599px;top:946.14px;font-family:'Liberation Sans', sans-serif;font-size:27px;line-height:27px;height:27px;color:#212529;font-weight:normal;font-style:normal;white-space:nowrap;">0,000000</div>
<div style="position:absolute;box-sizing:border-box;left:1804px;top:1061px;width:1475px;height:67px;background:#ececec;border:1.5px solid #c7ccd2;border-radius:7px;"></div>
<div style="position:absolute;left:3213px;top:1062.5px;width:1.5px;height:64.0px;background:#cfd4da;"></div>
<div style="position:absolute;right:160px;top:1082.98px;font-family:'Liberation Sans', sans-serif;font-size:27.2px;line-height:27.2px;height:27.2px;color:#212529;font-weight:normal;font-style:normal;white-space:nowrap;">-213,76</div>
<div style="position:absolute;left:2646.5px;width:1200px;text-align:center;top:1083.14px;font-family:'Liberation Sans', sans-serif;font-size:27px;line-height:27px;height:27px;color:#555;font-weight:normal;font-style:normal;white-space:nowrap;">€</div>
<div style="position:absolute;box-sizing:border-box;left:1804px;top:1200px;width:707px;height:66px;background:#fff;border:1.5px solid #c7ccd2;border-radius:7px;"></div>
<div style="position:absolute;left:1838.6px;top:1221.51px;font-family:'Liberation Sans', sans-serif;font-size:27.4px;line-height:27.4px;height:27.4px;color:#212529;font-weight:normal;font-style:normal;white-space:nowrap;">Caisse d'épargne</div>
<svg style="position:absolute;left:2483.75px;top:1226.25px;" width="21.5" height="13.5" viewBox="0 0 21.5 13.5"><polyline points="2,2 10.75,11.5 19.5,2" fill="none" stroke="#222" stroke-width="1.7"/></svg>
<div style="position:absolute;box-sizing:border-box;left:2572px;top:1200px;width:707px;height:66px;background:#fff;border:1.5px solid #c7ccd2;border-radius:7px;"></div>
<div style="position:absolute;box-sizing:border-box;left:3004px;top:1317px;width:139px;height:67px;background:#fff;border:1.5px solid #c8c8c8;border-radius:7px;"></div>
<div style="position:absolute;left:2473.5px;width:1200px;text-align:center;top:1338.72px;font-family:'Liberation Sans', sans-serif;font-size:27.5px;line-height:27.5px;height:27.5px;color:#222;font-weight:normal;font-style:normal;white-space:nowrap;">Fermer</div>
<div style="position:absolute;box-sizing:border-box;left:3150.7px;top:1317px;width:138.30000000000018px;height:67px;background:#f5c242;border:1.5px solid #f5c242;border-radius:7px;"></div>
<div style="position:absolute;left:2620px;width:1200px;text-align:center;top:1337.87px;font-family:'Liberation Sans', sans-serif;font-size:28.5px;line-height:28.5px;height:28.5px;color:#222;font-weight:normal;font-style:normal;white-space:nowrap;">Valider</div>
<svg style="position:absolute;left:2590px;top:375px;" width="480" height="290" viewBox="0 0 480 290"><line x1="12.6" y1="272" x2="427" y2="35.5" stroke="#e8401f" stroke-width="10.8"/><polygon points="471.7,9.3 412.6,12.6 439.1,58" fill="#e8401f"/></svg>
<div style="position:absolute;left:2688px;top:1420px;width:100px;height:100px;border-radius:50%;background:#ef87a9;box-shadow:0 2px 14px rgba(0,0,0,0.2)"></div>
<div style="position:absolute;left:2798px;top:1420px;width:100px;height:100px;border-radius:50%;background:#ef87a9;box-shadow:0 2px 14px rgba(0,0,0,0.2)"></div>
<div style="position:absolute;left:2908px;top:1420px;width:100px;height:100px;border-radius:50%;background:#ef87a9;box-shadow:0 2px 14px rgba(0,0,0,0.2)"></div>
<div style="position:absolute;left:3018px;top:1420px;width:100px;height:100px;border-radius:50%;background:#ef87a9;box-shadow:0 2px 14px rgba(0,0,0,0.2)"></div>
<div style="position:absolute;left:3128px;top:1420px;width:100px;height:100px;border-radius:50%;background:#ef87a9;box-shadow:0 2px 14px rgba(0,0,0,0.2)"></div>
<div style="position:absolute;left:3238px;top:1420px;width:100px;height:100px;border-radius:50%;background:#ef87a9;box-shadow:0 2px 14px rgba(0,0,0,0.2)"></div>
<svg style="position:absolute;left:2720px;top:1446px;" width="36" height="47" viewBox="0 0 36 47"><path d="M2,2 H34 V7.5 H11.5 L25,22.5 L10.5,39.5 H35 V45 H1 V40 L17.5,22.5 L2,6.5 Z" fill="#fff"/></svg>
<svg style="position:absolute;left:2831px;top:1442px;" width="36" height="47" viewBox="0 0 36 47"><path d="M9,1 H27 L35,6.5 V15.5 H1 V6.5 Z" fill="#fff"/><rect x="1" y="18.5" width="34" height="12" fill="#fff"/><rect x="1" y="33.5" width="34" height="12.5" fill="#fff"/><path d="M11.5,16 V9 H24.5 V16 H21.5 V12 H14.5 V16 Z" fill="#ef87a9"/><path d="M11.5,29.5 V22.5 H24.5 V29.5 H21.5 V25.5 H14.5 V29.5 Z" fill="#ef87a9"/><path d="M11.5,44 V37 H24.5 V44 H21.5 V40 H14.5 V44 Z" fill="#ef87a9"/></svg>
<svg style="position:absolute;left:2934px;top:1441px;" width="48" height="48" viewBox="0 0 48 48"><path d="M24.5,7.5 H9.5 Q4,7.5 4,13 V38 Q4,43.5 9.5,43.5 H34.5 Q40,43.5 40,38 V26" fill="none" stroke="#fff" stroke-width="5.5" stroke-linecap="round"/><path d="M38.5,2.5 Q41,0.5 43.5,2.5 L45.5,4.5 Q47.5,7 45.5,9.5 L43,12 L36,5 Z" fill="#fff"/><path d="M34,7 L41,14 L25,30 Q22,33 17.5,34 L11.5,35.5 L13,29.5 Q14,25 17,22 Z" fill="#fff"/></svg>
<svg style="position:absolute;left:3046px;top:1442px;" width="44" height="50" viewBox="0 0 44 50"><rect x="11" y="1.5" width="5" height="9" rx="2.5" fill="#fff"/><rect x="28" y="1.5" width="5" height="9" rx="2.5" fill="#fff"/><path d="M6,6.5 H38 Q42,6.5 42,10.5 V14 H2 V10.5 Q2,6.5 6,6.5 Z" fill="#fff"/><path d="M2,17 H42 V44 Q42,48 38,48 H6 Q2,48 2,44 Z" fill="#fff"/><rect x="7.5" y="23" width="5.5" height="5.5" rx="1" fill="#ef87a9"/><rect x="7.5" y="34.3" width="5.5" height="5.5" rx="1" fill="#ef87a9"/><rect x="19.3" y="23" width="5.5" height="5.5" rx="1" fill="#ef87a9"/><rect x="19.3" y="34.3" width="5.5" height="5.5" rx="1" fill="#ef87a9"/><rect x="31" y="23" width="5.5" height="5.5" rx="1" fill="#ef87a9"/><rect x="31" y="34.3" width="5.5" height="5.5" rx="1" fill="#ef87a9"/></svg>
<svg style="position:absolute;left:3158px;top:1436px;" width="36" height="50" viewBox="0 0 36 50"><polyline points="5,15 18,3 31,15" fill="none" stroke="#fff" stroke-width="5.2" stroke-linecap="round" stroke-linejoin="round"/><path d="M18,4 V37 Q18,44.5 10.5,44.5 H3.5" fill="none" stroke="#fff" stroke-width="5.2" stroke-linecap="round"/></svg>
<svg style="position:absolute;left:3266px;top:1437px;" width="44" height="50" viewBox="0 0 44 50"><path d="M13.5,40 L36,17.5 Q41,12.5 36.5,7.5 Q31.5,3 26.5,8 L7.5,27 Q1,33.5 7.5,40 Q14,46 20.5,39.5 L35,25" fill="none" stroke="#fff" stroke-width="4.6" stroke-linecap="round"/><path d="M13.5,32.5 L31,15" fill="none" stroke="#fff" stroke-width="4.6" stroke-linecap="round"/></svg>
<div style="position:absolute;left:3287px;top:1464px;width:41px;height:36px;border-radius:50%;background:#777"></div>
<div style="position:absolute;left:2707.5px;width:1200px;text-align:center;top:1471.18px;font-family:'Liberation Sans', sans-serif;font-size:24px;line-height:24px;height:24px;color:#fff;font-weight:bold;font-style:normal;white-space:nowrap;">0</div></body></html>
